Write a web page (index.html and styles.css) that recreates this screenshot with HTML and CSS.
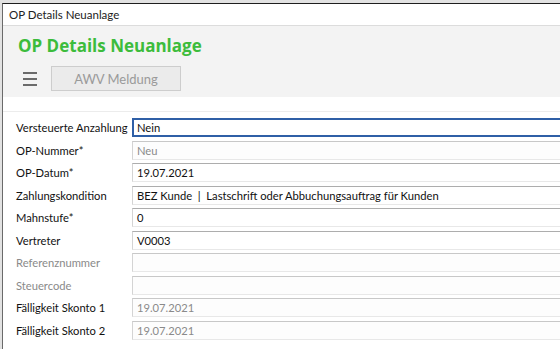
FILE: index.html
```html
<!DOCTYPE html>
<html lang="de">
<head>
    <meta charset="UTF-8">
    <title>OP Details Neuanlage</title>
    <link rel="stylesheet" href="styles.css">
</head>
<body>
    <div class="window">
        <div class="titlebar">OP Details Neuanlage</div>

        <div class="header">
            <h1>OP Details Neuanlage</h1>
            <div class="toolbar">
                <div class="menu-icon">
                    <span></span><span></span><span></span>
                </div>
                <button class="awv-btn" disabled>AWV Meldung</button>
            </div>
        </div>

        <div class="form">
            <label>Versteuerte Anzahlung</label>
            <div class="field focused">Nein</div>

            <label>OP-Nummer*</label>
            <div class="field readonly">Neu</div>

            <label>OP-Datum*</label>
            <div class="field">19.07.2021</div>

            <label>Zahlungskondition</label>
            <div class="field">BEZ Kunde &nbsp;|&nbsp; Lastschrift oder Abbuchungsauftrag für Kunden</div>

            <label>Mahnstufe*</label>
            <div class="field">0</div>

            <label>Vertreter</label>
            <div class="field">V0003</div>

            <label class="muted">Referenznummer</label>
            <div class="field readonly"></div>

            <label class="muted">Steuercode</label>
            <div class="field readonly"></div>

            <label>Fälligkeit Skonto 1</label>
            <div class="field readonly">19.07.2021</div>

            <label>Fälligkeit Skonto 2</label>
            <div class="field readonly">19.07.2021</div>
        </div>
    </div>
</body>
</html>
```

FILE: styles.css
```css
* {
    margin: 0;
    padding: 0;
    box-sizing: border-box;
}

body {
    font-family: Lato, "Open Sans", Arial, sans-serif;
    font-size: 11.2px;
    color: #111;
    background-color: #e2e2e2;
    overflow: hidden;
    height: 349px;
}

.window {
    margin: 3px 0 0 2px;
    height: 346px;
    background: white;
    border-top: 1px solid #1e1e1e;
    border-left: 1px solid #6a6a6a;
}

.titlebar {
    height: 22px;
    padding-left: 6px;
    line-height: 21px;
    font-size: 11.5px;
    color: #222;
    border-bottom: 1px solid #dcdcdc;
}

.header {
    background-color: #f3f3f3;
    height: 71px;
    padding: 8px 0 0 15px;
}

.header h1 {
    font-family: "Open Sans", Arial, sans-serif;
    font-size: 17px;
    font-weight: bold;
    color: #3cbc3c;
    line-height: 24px;
}

.toolbar {
    display: flex;
    align-items: center;
    gap: 14px;
    margin-top: 8px;
}

.menu-icon {
    display: flex;
    flex-direction: column;
    gap: 4px;
    width: 14px;
    margin-left: 5px;
}

.menu-icon span {
    display: block;
    height: 2px;
    background-color: #6b6b6b;
}

.awv-btn {
    width: 130px;
    height: 25px;
    background-color: #ebebeb;
    border: 1px solid #cdcdcd;
    color: #9a9a9a;
    font-family: inherit;
    font-size: 13px;
}

.form {
    display: grid;
    grid-template-columns: 116px 1fr;
    grid-auto-rows: 19px;
    row-gap: 3.56px;
    margin-top: 14px;
    padding: 6px 0 0 13px;
    border-top: 1px solid #ececec;
}

.form label {
    line-height: 19px;
    white-space: nowrap;
}

.form label.muted {
    color: #8a8a8a;
}

.field {
    margin-right: -10px;
    padding-left: 4px;
    line-height: 17px;
    border: 1px solid #d4d4d4;
    border-top-color: #adadad;
    border-bottom-color: #e8e8e8;
    border-right: none;
    white-space: nowrap;
}

.field.focused {
    border: 2px solid #2f5fa6;
    border-right: none;
    line-height: 15px;
    padding-left: 3px;
}

.field.readonly {
    color: #8a8a8a;
    background-color: #fdfdfd;
    border-top-color: #c8c8c8;
}
```
